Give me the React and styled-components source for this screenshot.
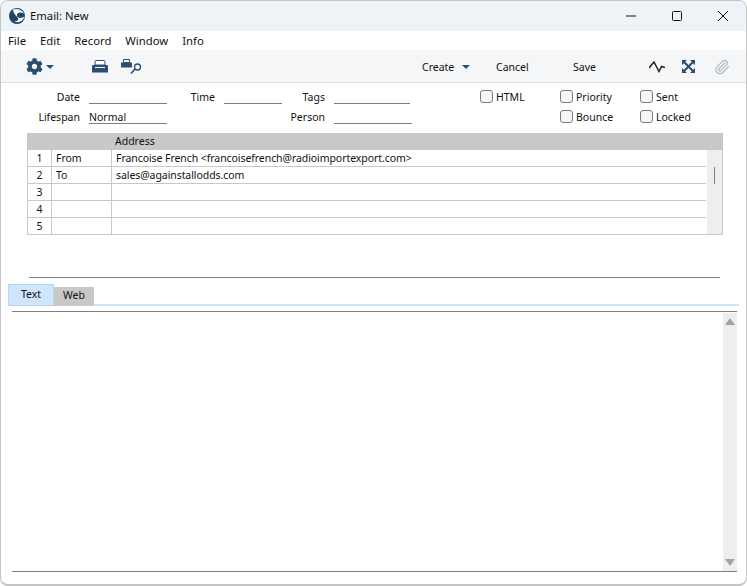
import styled, { createGlobalStyle } from 'styled-components';
import { FaCog } from 'react-icons/fa';
import { Paperclip } from 'lucide-react';

const GlobalStyle = createGlobalStyle`
    html, body {
        margin: 0;
        background: #ffffff;
    }

    * {
        box-sizing: border-box;
    }
`;

const Window = styled.div`
    width: 747px;
    height: 586px;
    display: flex;
    flex-direction: column;
    overflow: hidden;
    background: #fff;
    border: 1px solid #c4c4c4;
    border-bottom-width: 2px;
    border-radius: 8px;
    color: #111;
    font-family: "Noto Sans", sans-serif;
    font-size: 10.5px;
`;

const TitleBar = styled.header`
    height: 30px;
    flex: none;
    display: flex;
    align-items: center;
    padding-left: 8px;
    background: #eef3f8;
    font-size: 11.3px;
`;

const Title = styled.span`
    margin-left: 5px;
    padding-bottom: 2px;
    flex: 1;
`;

const WinButton = styled.span`
    width: 46px;
    display: flex;
    justify-content: center;
`;

const MenuBar = styled.nav`
    height: 19px;
    flex: none;
    display: flex;
    align-items: center;
    padding-left: 7px;
    gap: 14px;
    font-size: 11.3px;
`;

const Toolbar = styled.div`
    height: 33px;
    flex: none;
    display: flex;
    align-items: center;
    background: #f5f6f7;
    border-bottom: 1px solid #dcdcdc;
    padding: 1px 0 0 25px;
`;

const ToolIcon = styled.span`
    display: flex;
    align-items: center;
    color: ${ ( { muted } ) => muted ? '#b4bdc6' : '#2c4d6e' };
    margin-left: ${ ( { left } ) => left || 0 }px;
`;

const ToolLabel = styled.span`
    display: flex;
    align-items: center;
    gap: 8px;
    width: ${ ( { width } ) => width }px;
    margin-left: ${ ( { left } ) => left || 0 }px;
`;

const Caret = styled.span`
    width: 0;
    height: 0;
    border-left: 4px solid transparent;
    border-right: 4px solid transparent;
    border-top: 4px solid #2c4d6e;
`;

const Form = styled.section`
    display: grid;
    grid-template-columns: 88px 78px 57px 58px 52px 78px 68px 80px 80px 80px;
    grid-auto-rows: 20px;
    margin-top: 5px;
    flex: none;
`;

const Label = styled.label`
    text-align: right;
    padding-right: 9px;
    line-height: 18px;
`;

const Field = styled.div`
    height: 15px;
    margin-top: 1px;
    line-height: 16px;
    border-bottom: 1px solid #808080;
    width: ${ ( { width } ) => width || '100%' };
`;

const Spacer = styled.div`
    grid-column: span ${ ( { span } ) => span };
`;

const Check = styled.label`
    display: flex;
    align-items: flex-start;
    gap: 3px;
    line-height: 18px;
    grid-column: ${ ( { column } ) => column || 'auto' };
`;

const Box = styled.span`
    width: 13px;
    height: 13px;
    margin-top: 2px;
    border: 1px solid #7a7a7a;
    border-radius: 3px;
    background: #f6f6f6;
`;

const Table = styled.div`
    margin: 5px 23px 0 26px;
    flex: none;
    border: 1px solid #c8c8c8;
    border-top: 0;
    display: flex;
    flex-direction: column;
`;

const HeaderRow = styled.div`
    height: 17px;
    background: #c8c8c8;
    padding-left: 87px;
    line-height: 16px;
`;

const TableBody = styled.div`
    display: flex;
`;

const Rows = styled.div`
    flex: 1;
`;

const Row = styled.div`
    display: grid;
    grid-template-columns: 24px 60px 1fr;
    height: 17px;
    border-bottom: 1px solid #c8c8c8;
    line-height: 16px;

    &:last-child {
        border-bottom: 0;
        height: 16px;
    }
`;

const NumCell = styled.div`
    text-align: center;
    border-right: 1px solid #c8c8c8;
`;

const Cell = styled.div`
    padding-left: 4px;
    border-right: ${ ( { divider } ) => divider ? '1px solid #c8c8c8' : '0' };
    white-space: nowrap;
    letter-spacing: -0.07px;
`;

const TableScroll = styled.div`
    width: 15px;
    margin-left: 1px;
    background: #eeeeee;
    padding: 17px 0 0 7px;
`;

const Thumb = styled.div`
    width: 1px;
    height: 17px;
    background: #808080;
`;

const Divider = styled.hr`
    margin: 42px 26px 0 28px;
    border: 0;
    border-top: 1px solid #808080;
    flex: none;
`;

const Tabs = styled.div`
    display: flex;
    align-items: flex-end;
    margin: 6px 7px 0 7px;
    height: 22px;
    flex: none;
    border-bottom: 2px solid #cfe5fb;
`;

const Tab = styled.div`
    text-align: center;
    width: ${ ( { active } ) => active ? 46 : 40 }px;
    height: ${ ( { active } ) => active ? 22 : 19 }px;
    margin-bottom: -2px;
    line-height: ${ ( { active } ) => active ? 18 : 17 }px;
    background: ${ ( { active } ) => active ? '#cfe5fb' : '#c8c8c8' };
    border: ${ ( { active } ) => active ? '1px solid #b5d5f5' : '0' };
`;

const Editor = styled.div`
    flex: 1;
    margin: 5px 9px 12px 11px;
    border-top: 1px solid #808080;
    border-bottom: 1px solid #808080;
    display: flex;
    justify-content: flex-end;
`;

const EditorScroll = styled.div`
    width: 14px;
    margin-top: 1px;
    background: #eeeeee;
    display: flex;
    flex-direction: column;
    justify-content: space-between;
    align-items: center;
    padding: 5px 0;
`;

const Arrow = styled.span`
    width: 0;
    height: 0;
    border-left: 5px solid transparent;
    border-right: 5px solid transparent;
    border-${ ( { down } ) => down ? 'top' : 'bottom' }: 7px solid #a3a3a3;
`;

const Logo = () => (
    <svg width="16" height="16" viewBox="0 0 16 16">
        <circle cx="8" cy="8" r="8" fill="#1f4564" />
        <path d="M4 1.500C8 0 13 1.500 15 5.500 11.500 3.500 8 4.500 8 7c0 3 4 4 7.500 1.500-1 4.500-6 7-10.500 5 3 0 5-1.500 4-3.500C8 8 4.500 6.500 4 1.500z" fill="#f2f6fa" />
    </svg>
);

const Printer = () => (
    <svg width="16" height="13" viewBox="0 0 16 13">
        <path d="M3 5h10V1.500a1 1 0 0 0-1-1H4a1 1 0 0 0-1 1z" fill="#fff" stroke="#2c4d6e" />
        <path d="M1 5h14a1 1 0 0 1 1 1v6.500H0V6a1 1 0 0 1 1-1z" fill="#2c4d6e" />
        <path d="M3 7.500h10" stroke="#f5f6f7" strokeWidth="1.200" />
    </svg>
);

const PrintSearch = () => (
    <svg width="21" height="15" viewBox="0 0 21 15">
        <path d="M2.500 .5h6v3h-6z" fill="none" stroke="#2c4d6e" />
        <path d="M0 3.500h11v5H0z" fill="#2c4d6e" />
        <circle cx="16.500" cy="8" r="3" fill="none" stroke="#2c4d6e" strokeWidth="1.300" />
        <path d="M14 10L10 14.500" stroke="#2c4d6e" strokeWidth="1.600" />
    </svg>
);

const Activity = () => (
    <svg width="16" height="12" viewBox="0 0 16 12">
        <path d="M0 7L5 1 10 10.500 12.500 5.500 16 6.500" fill="none" stroke="#222" strokeWidth="1.500" />
    </svg>
);

const Expand = () => (
    <svg width="13" height="13" viewBox="0 0 13 13" fill="#2c4d6e">
        <path d="M0 0h5L0 5zM13 0v5L8 0zM0 13V8l5 5zM13 13H8l5-5z" />
        <path d="M2 2l9 9M11 2L2 11" stroke="#2c4d6e" strokeWidth="2" />
    </svg>
);

const rows = [
    [ 'From', 'Francoise French <francoisefrench@radioimportexport.com>' ],
    [ 'To', 'sales@againstallodds.com' ],
    [ '', '' ],
    [ '', '' ],
    [ '', '' ],
];

function App() {
    return (
        <>
            <GlobalStyle />
            <Window>
                <TitleBar>
                    <Logo />
                    <Title>Email: New</Title>
                    <WinButton>
                        <svg width="10" height="10" viewBox="0 0 10 10"><path d="M0 5h10" stroke="#111" /></svg>
                    </WinButton>
                    <WinButton>
                        <svg width="10" height="10" viewBox="0 0 10 10"><rect x=".5" y=".5" width="9" height="9" rx="1" fill="none" stroke="#111" /></svg>
                    </WinButton>
                    <WinButton>
                        <svg width="10" height="10" viewBox="0 0 10 10"><path d="M0 0l10 10M10 0L0 10" stroke="#111" /></svg>
                    </WinButton>
                </TitleBar>

                <MenuBar>
                    <span>File</span>
                    <span>Edit</span>
                    <span>Record</span>
                    <span>Window</span>
                    <span>Info</span>
                </MenuBar>

                <Toolbar>
                    <ToolIcon><FaCog size={ 17 } /></ToolIcon>
                    <ToolIcon left={ 3 }><Caret /></ToolIcon>
                    <ToolIcon left={ 38 }><Printer /></ToolIcon>
                    <ToolIcon left={ 13 }><PrintSearch /></ToolIcon>
                    <ToolLabel width={ 74 } left={ 280 }>Create <Caret /></ToolLabel>
                    <ToolLabel width={ 77 }>Cancel</ToolLabel>
                    <ToolLabel width={ 76 }>Save</ToolLabel>
                    <ToolIcon><Activity /></ToolIcon>
                    <ToolIcon left={ 17 }><Expand /></ToolIcon>
                    <ToolIcon left={ 19 } muted><Paperclip size={ 16 } /></ToolIcon>
                </Toolbar>

                <Form>
                    <Label>Date</Label>
                    <Field />
                    <Label>Time</Label>
                    <Field />
                    <Label>Tags</Label>
                    <Field width="76px" />
                    <Check column={ 8 }><Box />HTML</Check>
                    <Check><Box />Priority</Check>
                    <Check><Box />Sent</Check>
                    <Label>Lifespan</Label>
                    <Field>Normal</Field>
                    <Spacer span={ 2 } />
                    <Label>Person</Label>
                    <Field />
                    <Spacer span={ 2 } />
                    <Check><Box />Bounce</Check>
                    <Check><Box />Locked</Check>
                </Form>

                <Table>
                    <HeaderRow>Address</HeaderRow>
                    <TableBody>
                        <Rows>
                            { rows.map( ( [ type, address ], i ) => (
                                <Row key={ i }>
                                    <NumCell>{ i + 1 }</NumCell>
                                    <Cell divider>{ type }</Cell>
                                    <Cell>{ address }</Cell>
                                </Row>
                            ) ) }
                        </Rows>
                        <TableScroll><Thumb /></TableScroll>
                    </TableBody>
                </Table>

                <Divider />

                <Tabs>
                    <Tab active>Text</Tab>
                    <Tab>Web</Tab>
                </Tabs>

                <Editor>
                    <EditorScroll>
                        <Arrow />
                        <Arrow down />
                    </EditorScroll>
                </Editor>
            </Window>
        </>
    );
}

export default App;
